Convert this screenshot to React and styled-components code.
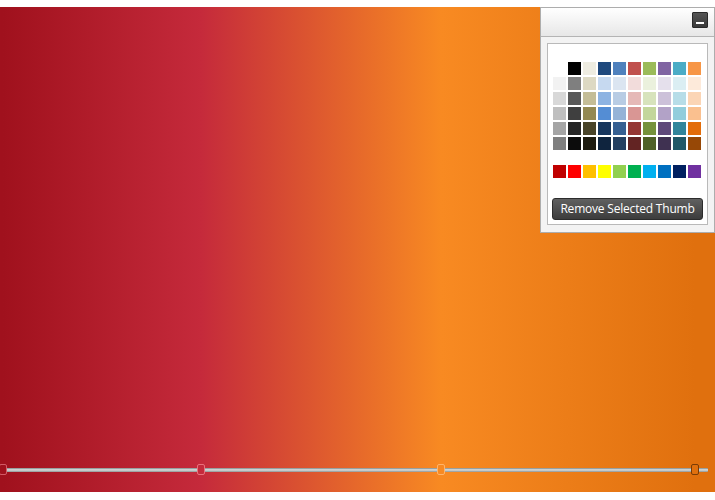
import React, { useState } from 'react'
import styled, { createGlobalStyle } from 'styled-components'

const GlobalStyle = createGlobalStyle`
  html, body {
    margin: 0;
    padding: 0;
    background: #ffffff;
    font-family: "Open Sans", "Noto Sans", sans-serif;
  }
`

const Page = styled.div`
  padding-top: 7px;
  position: relative;
  width: 715px;
`

const Canvas = styled.div`
  display: flex;
  flex-direction: column;
  justify-content: flex-end;
  height: 485px;
  padding-bottom: 17px;
  box-sizing: border-box;
`

const Slider = styled.div`
  position: relative;
  height: 11px;
  display: flex;
  align-items: center;
  padding: 0 7px 0 3px;
`

const Track = styled.div`
  flex: 1;
  height: 4px;
  border-radius: 1px;
  background: linear-gradient(#7e8888 0%, #dcdfdf 45%, #c8cccc 60%, #8e9494 100%);
`

const Thumb = styled.div`
  position: absolute;
  top: 0;
  width: 8px;
  height: 11px;
  box-sizing: border-box;
  border-radius: 2px;
  border: 1px solid ${({ $border }) => $border};
  background: ${({ $color }) => $color};
  cursor: pointer;
`

const Panel = styled.div`
  position: absolute;
  top: 7px;
  left: 540px;
  width: 175px;
  box-sizing: border-box;
  border: 1px solid #adadad;
  background: #f3f3f3;
`

const Header = styled.div`
  height: 29px;
  border-bottom: 1px solid #b4b4b4;
  background: linear-gradient(#ffffff, #e7e7e7);
  display: flex;
  align-items: flex-start;
  justify-content: flex-end;
  padding: 4px 6px 0 0;
  box-sizing: border-box;
`

const MinButton = styled.button`
  width: 16px;
  height: 16px;
  padding: 0 0 3px;
  border: 1px solid #2a2a2a;
  border-radius: 1px;
  background: linear-gradient(#555555, #3a3a3a);
  display: flex;
  align-items: flex-end;
  justify-content: center;
  cursor: pointer;

  &::after {
    content: '';
    width: 8px;
    height: 2px;
    background: #ffffff;
  }
`

const Body = styled.div`
  padding: 6px 6px 7px 6px;
`

const PaletteBox = styled.div`
  background: #ffffff;
  border: 1px solid #b9b9b9;
  padding: 18px 5px 4px 5px;
  display: flex;
  flex-direction: column;
`

const SwatchGrid = styled.div`
  display: grid;
  grid-template-columns: repeat(10, 13px);
  grid-auto-rows: 13px;
  gap: 2px;
  margin-top: ${({ $gap }) => $gap || 0}px;
`

const Swatch = styled.div`
  background: ${({ $color }) => $color};
  cursor: pointer;
`

const RemoveButton = styled.button`
  margin: 20px -1px 0;
  height: 22px;
  border: 1px solid #2c2c2c;
  border-radius: 3px;
  background: linear-gradient(#606060, #3c3c3c);
  color: #ffffff;
  font-family: "Open Sans", "Noto Sans", sans-serif;
  font-size: 12px;
  letter-spacing: -0.2px;
  line-height: 18px;
  padding: 0;
  cursor: pointer;
`

const themeColumns = [
  ['#ffffff', '#f2f2f2', '#d8d8d8', '#bfbfbf', '#a5a5a5', '#7f7f7f'],
  ['#000000', '#7f7f7f', '#595959', '#3f3f3f', '#262626', '#0c0c0c'],
  ['#eeece1', '#ddd9c3', '#c4bd97', '#938953', '#494429', '#1d1b10'],
  ['#1f497d', '#c6d9f0', '#8db3e2', '#548dd4', '#17365d', '#0f243e'],
  ['#4f81bd', '#dbe5f1', '#b8cce4', '#95b3d7', '#366092', '#244061'],
  ['#c0504d', '#f2dcdb', '#e5b9b7', '#d99694', '#953734', '#632423'],
  ['#9bbb59', '#ebf1dd', '#d7e3bc', '#c3d69b', '#76923c', '#4f6128'],
  ['#8064a2', '#e5e0ec', '#ccc1d9', '#b2a2c7', '#5f497a', '#3f3151'],
  ['#4bacc6', '#dbeef3', '#b7dde8', '#92cddc', '#31859b', '#205867'],
  ['#f79646', '#fdeada', '#fbd5b5', '#fac08f', '#e36c09', '#974806'],
]

const standardColors = [
  '#c00000', '#ff0000', '#ffc000', '#ffff00', '#92d050',
  '#00b050', '#00b0f0', '#0070c0', '#002060', '#7030a0',
]

const initialStops = [
  { pos: 3, color: '#a0111d', border: '#d25a66' },
  { pos: 201, color: '#c52a3b', border: '#e9707c' },
  { pos: 441, color: '#f88a22', border: '#ffb46a' },
  { pos: 695, color: '#e0700e', border: '#7a3c06' },
]

const App = () => {
  const [stops, setStops] = useState(initialStops)
  const [selected, setSelected] = useState(3)

  const gradient = `linear-gradient(to right, ${stops
    .map((s) => `${s.color} ${s.pos}px`)
    .join(', ')})`

  const rows = [0, 1, 2, 3, 4, 5].flatMap((r) => themeColumns.map((col) => col[r]))

  const pick = (color) => {
    setStops(stops.map((s, i) => (i === selected ? { ...s, color } : s)))
  }

  const remove = () => {
    if (stops.length <= 2) return
    setStops(stops.filter((_, i) => i !== selected))
    setSelected(0)
  }

  return (
    <>
      <GlobalStyle />
      <Page>
        <Canvas style={{ background: gradient }}>
          <Slider>
            <Track />
            {stops.map((s, i) => (
              <Thumb
                key={i}
                $color={s.color}
                $border={s.border}
                style={{ left: s.pos - 4 }}
                onClick={() => setSelected(i)}
              />
            ))}
          </Slider>
        </Canvas>
        <Panel>
          <Header>
            <MinButton aria-label="Minimize" />
          </Header>
          <Body>
            <PaletteBox>
              <SwatchGrid>
                {rows.map((c, i) => (
                  <Swatch key={i} $color={c} onClick={() => pick(c)} />
                ))}
              </SwatchGrid>
              <SwatchGrid $gap={15}>
                {standardColors.map((c) => (
                  <Swatch key={c} $color={c} onClick={() => pick(c)} />
                ))}
              </SwatchGrid>
              <RemoveButton onClick={remove}>Remove Selected Thumb</RemoveButton>
            </PaletteBox>
          </Body>
        </Panel>
      </Page>
    </>
  )
}

export default App
